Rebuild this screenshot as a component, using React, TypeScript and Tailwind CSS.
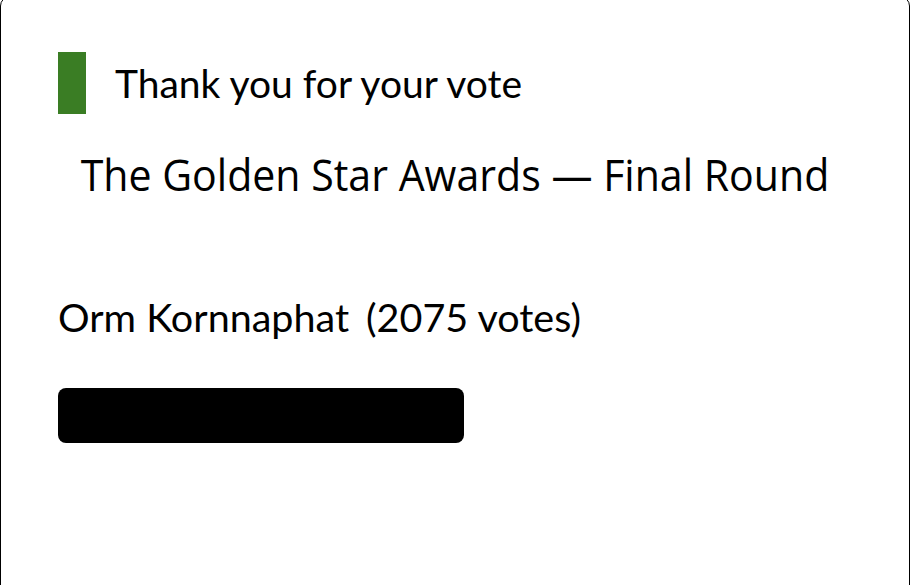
export default function App() {
  return (
    <div className="w-[910px] h-[585px] overflow-hidden bg-white">
      <div className="-mt-[4px] h-[620px] rounded-[10px] border border-black bg-white pl-[57px] pr-[57px] pt-[55px]">
        <div className="flex items-center gap-[29px]">
          <div className="h-[62px] w-[28px] bg-[#3a7d24]" />
          <div className="font-['Lato'] text-[39px] leading-none text-black">Thank you for your vote</div>
        </div>
        <div className="mt-[39px] -ml-[57px] -mr-[57px] scale-x-[0.955] text-center font-['Open_Sans'] text-[43px] leading-none text-black">
          The Golden Star Awards — Final Round
        </div>
        <div className="mt-[101px] font-['Lato'] text-[39.5px] leading-none text-black">
          <span>Orm Kornnaphat</span>
          <span className="ml-[17px]">(2075 votes)</span>
        </div>
        <div className="mt-[51px] h-[55px] w-[406px] rounded-[8px] bg-black" />
      </div>
    </div>
  );
}
